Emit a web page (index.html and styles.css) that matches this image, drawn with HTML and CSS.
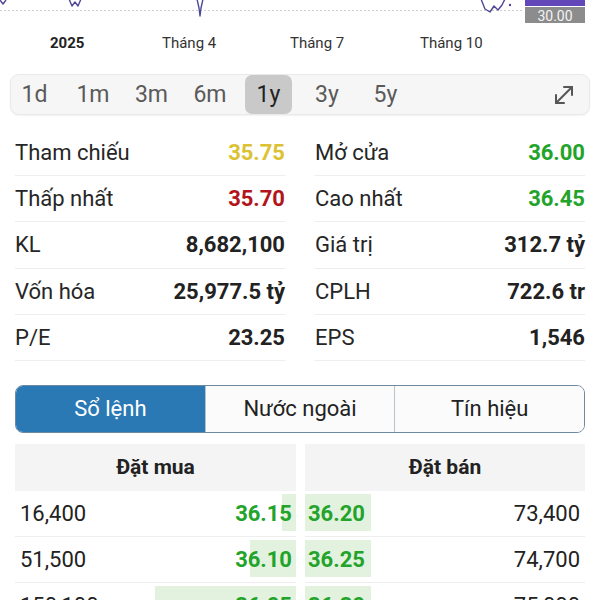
FILE: index.html
```html
<!DOCTYPE html>
<html lang="vi">
<head>
<meta charset="utf-8">
<link rel="stylesheet" href="styles.css">
</head>
<body>
<div class="chart">
  <svg width="600" height="28" viewBox="0 0 600 28">
    <line x1="0" y1="10.5" x2="522" y2="10.5" stroke="#cfcfcf" stroke-width="1" stroke-dasharray="2 2"/>
    <g fill="none" stroke="#4f4894" stroke-width="1.4" stroke-linejoin="round">
      <polyline points="0,0 3,4 6,0"/>
      <polyline points="69,-1 72,6 75,2 78,6 81,-1"/>
      <polyline points="197,-1 199,8 200,16 201,8 203,-1"/>
      <polyline points="481,-1 485,9 490,12 494,6 498,10 502,5 505,-1"/>
    </g>
    <circle cx="510" cy="5" r="1.2" fill="#4f4894"/>
    <rect x="525" y="-2" width="60" height="8" fill="#6247b8"/>
    <rect x="525" y="7" width="60" height="16" fill="#8c8c8c"/>
    <text x="555" y="20.5" text-anchor="middle" class="tag">30.00</text>
  </svg>
</div>
<div class="axis">
  <span class="tick year" style="left:50px">2025</span>
  <span class="tick" style="left:162px">Tháng 4</span>
  <span class="tick" style="left:290px">Tháng 7</span>
  <span class="tick" style="left:420px">Tháng 10</span>
</div>

<div class="periods">
  <span class="period">1d</span>
  <span class="period">1m</span>
  <span class="period">3m</span>
  <span class="period">6m</span>
  <span class="period active">1y</span>
  <span class="period">3y</span>
  <span class="period">5y</span>
  <span class="spacer"></span>
  <svg class="expand" width="22" height="22" viewBox="0 0 22 22">
    <g fill="none" stroke="#555" stroke-width="2" stroke-linecap="round" stroke-linejoin="round">
      <line x1="3" y1="19" x2="19" y2="3"/>
      <polyline points="11,3 19,3 19,11"/>
      <polyline points="3,11 3,19 11,19"/>
    </g>
  </svg>
</div>

<div class="stats">
  <div class="stat"><span class="label">Tham chiếu</span><span class="val ref">35.75</span></div>
  <div class="stat"><span class="label">Mở cửa</span><span class="val up">36.00</span></div>
  <div class="stat"><span class="label">Thấp nhất</span><span class="val down">35.70</span></div>
  <div class="stat"><span class="label">Cao nhất</span><span class="val up">36.45</span></div>
  <div class="stat"><span class="label">KL</span><span class="val">8,682,100</span></div>
  <div class="stat"><span class="label">Giá trị</span><span class="val">312.7 tỷ</span></div>
  <div class="stat"><span class="label">Vốn hóa</span><span class="val">25,977.5 tỷ</span></div>
  <div class="stat"><span class="label">CPLH</span><span class="val">722.6 tr</span></div>
  <div class="stat"><span class="label">P/E</span><span class="val">23.25</span></div>
  <div class="stat"><span class="label">EPS</span><span class="val">1,546</span></div>
</div>

<div class="tabs">
  <div class="tab active">Sổ lệnh</div>
  <div class="tab">Nước ngoài</div>
  <div class="tab">Tín hiệu</div>
</div>

<div class="book">
  <div class="side buy">
    <div class="head">Đặt mua</div>
    <div class="row"><span class="bar" style="width:14px"></span><span class="qty">16,400</span><span class="price">36.15</span></div>
    <div class="row"><span class="bar" style="width:46px"></span><span class="qty">51,500</span><span class="price">36.10</span></div>
    <div class="row"><span class="bar" style="width:141px"></span><span class="qty">150,100</span><span class="price">36.05</span></div>
  </div>
  <div class="side sell">
    <div class="head">Đặt bán</div>
    <div class="row"><span class="bar" style="width:66px"></span><span class="price">36.20</span><span class="qty">73,400</span></div>
    <div class="row"><span class="bar" style="width:66px"></span><span class="price">36.25</span><span class="qty">74,700</span></div>
    <div class="row"><span class="bar" style="width:66px"></span><span class="price">36.30</span><span class="qty">75,000</span></div>
  </div>
</div>
</body>
</html>
```

FILE: styles.css
```css
* { box-sizing: border-box; }
html, body { margin: 0; padding: 0; background: #fff; overflow: hidden; }
body {
  font-family: Roboto, "Noto Sans", "Liberation Sans", sans-serif;
  color: #222;
  width: 600px;
}
.chart { height: 28px; }
.chart svg { display: block; }
.tag { font-family: Roboto, sans-serif; font-size: 14px; fill: #f4f4f4; }

.axis {
  position: relative;
  height: 30px;
  font-size: 15px;
  color: #333;
}
.tick { position: absolute; top: 0; line-height: 30px; }
.year { font-weight: 700; color: #222; }

.periods {
  margin: 16px 10px 0;
  height: 41px;
  background: #f6f6f6;
  border: 1px solid #e9e9e9;
  border-radius: 9px;
  display: flex;
  align-items: center;
  gap: 11.5px;
  padding: 0 12px 0 0;
  box-shadow: 0 1px 2px rgba(0,0,0,0.06);
}
.period {
  width: 47px;
  height: 39px;
  display: flex;
  align-items: center;
  justify-content: center;
  font-size: 23px;
  color: #5a5a5a;
  border-radius: 7px;
}
.period.active { background: #c9c9c9; color: #222; }
.spacer { flex: 1; }
.expand { display: block; margin-right: 2px; }

.stats {
  margin: 15px 15px 0;
  display: grid;
  grid-template-columns: 1fr 1fr;
  column-gap: 30px;
}
.stat {
  height: 46.2px;
  display: flex;
  align-items: center;
  justify-content: space-between;
  border-bottom: 1px solid #eeeeee;
  font-size: 22px;
}
.label { color: #262626; }
.val { font-weight: 700; color: #222; }
.val.ref { color: #dcc233; }
.val.down { color: #b3141b; }
.val.up { color: #22a32a; }

.tabs {
  margin: 24px 15px 0;
  height: 48px;
  display: flex;
  border: 1px solid #6e8aa3;
  border-radius: 8px;
  overflow: hidden;
}
.tab {
  flex: 1;
  display: flex;
  align-items: center;
  justify-content: center;
  font-size: 22px;
  color: #222;
  background: #fbfbfb;
  border-left: 1px solid #b9c3cc;
}
.tab:first-child { border-left: none; }
.tab.active { background: #2a79b5; color: #fff; }

.book {
  margin: 11px 15px 0;
  display: grid;
  grid-template-columns: 281px 280px;
  column-gap: 9px;
}
.head {
  height: 47px;
  background: #f4f4f4;
  display: flex;
  align-items: center;
  justify-content: center;
  font-size: 21px;
  font-weight: 700;
  color: #222;
}
.row {
  position: relative;
  height: 46px;
  display: flex;
  align-items: center;
  justify-content: space-between;
  border-bottom: 1px solid #eeeeee;
  font-size: 22px;
}
.bar {
  position: absolute;
  top: 3px;
  height: 37px;
  background: #e2f2df;
}
.buy .bar { right: 0; }
.sell .bar { left: 0; }
.qty { position: relative; color: #222; }
.price { position: relative; font-weight: 700; color: #22a32a; }
.buy .qty { padding-left: 5px; }
.buy .price { padding-right: 4px; }
.sell .price { padding-left: 3px; }
.sell .qty { padding-right: 5px; }
```
